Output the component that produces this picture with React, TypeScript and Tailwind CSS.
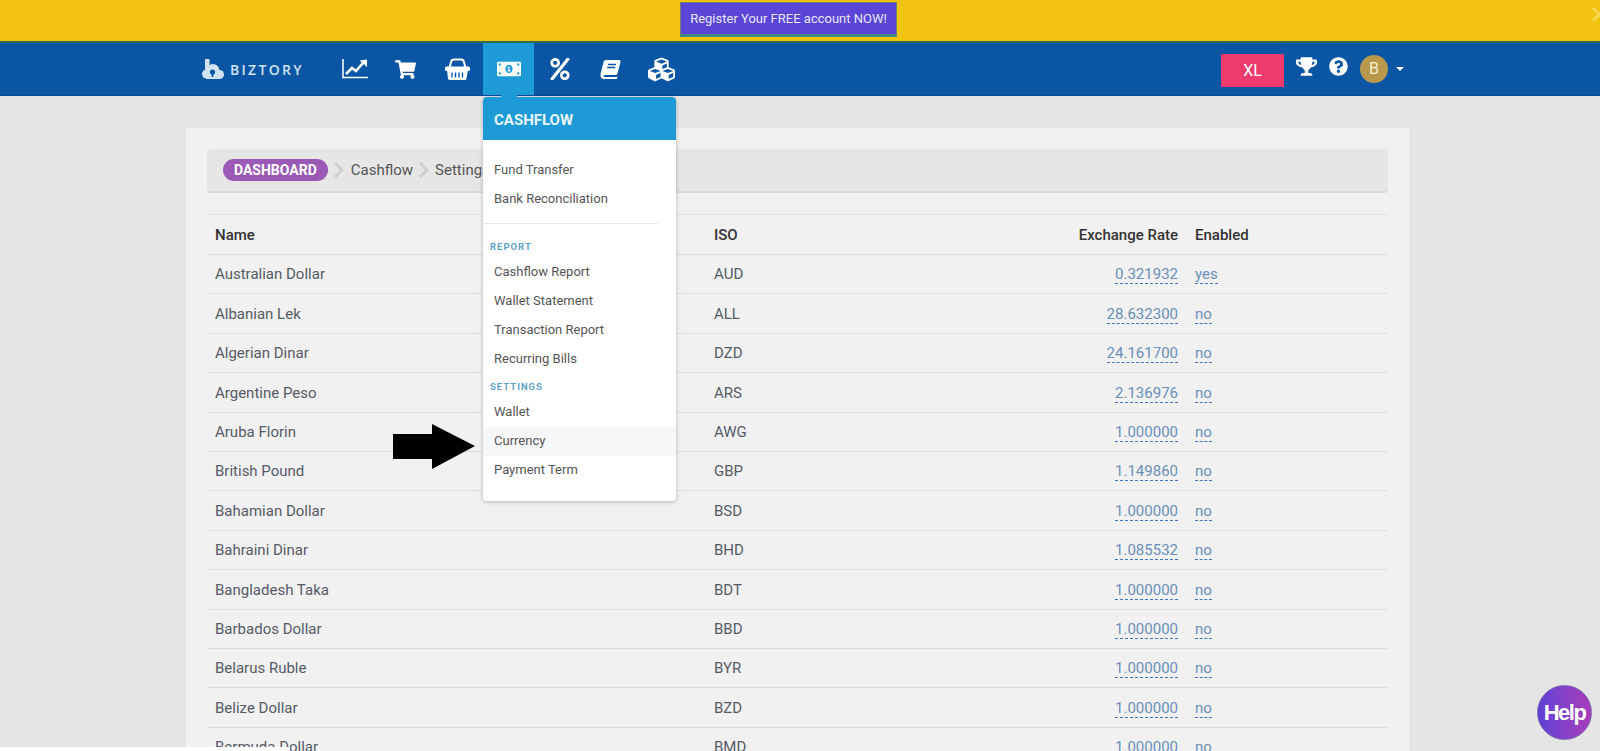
import { FaCubes, FaMoneyBillAlt, FaPercent, FaQuestionCircle, FaShoppingCart, FaTrophy } from "react-icons/fa";

const rows = [
  ["Australian Dollar", "AUD", "0.321932", "yes"],
  ["Albanian Lek", "ALL", "28.632300", "no"],
  ["Algerian Dinar", "DZD", "24.161700", "no"],
  ["Argentine Peso", "ARS", "2.136976", "no"],
  ["Aruba Florin", "AWG", "1.000000", "no"],
  ["British Pound", "GBP", "1.149860", "no"],
  ["Bahamian Dollar", "BSD", "1.000000", "no"],
  ["Bahraini Dinar", "BHD", "1.085532", "no"],
  ["Bangladesh Taka", "BDT", "1.000000", "no"],
  ["Barbados Dollar", "BBD", "1.000000", "no"],
  ["Belarus Ruble", "BYR", "1.000000", "no"],
  ["Belize Dollar", "BZD", "1.000000", "no"],
  ["Bermuda Dollar", "BMD", "1.000000", "no"],
];

function ChartIcon() {
  return (
    <svg width="26" height="20" viewBox="0 0 26 20" fill="none" stroke="currentColor" className="mr-[2px]">
      <path d="M1 0v18.500h25" strokeWidth="1.500" />
      <path d="M4 15l6-6 4 3 7-8" strokeWidth="2.600" />
      <path d="M17.500 1.500L25 0.500V8z" fill="currentColor" stroke="none" />
    </svg>
  );
}

function BasketIcon() {
  return (
    <svg width="25" height="22" viewBox="0 0 25 22">
      <path d="M4.500 10L6 4q.5-2.500 3-2.500h7q2.500 0 3 2.500L20.500 10" fill="none" stroke="currentColor" strokeWidth="2" />
      <rect x="0" y="8.500" width="25" height="4.500" rx="1.500" fill="currentColor" />
      <path d="M2 12h21l-1.500 8.500q-.3 1.500-2 1.500h-14.500q-1.700 0-2-1.500z" fill="currentColor" />
      <path d="M7 14.500v5M10.500 14.500v5M14 14.500v5M17.500 14.500v5" stroke="#0a56a5" strokeWidth="1.400" />
    </svg>
  );
}

function BookIcon() {
  return (
    <svg width="21" height="19" viewBox="0 0 21 19">
      <path d="M6 0h13q2 0 1.500 2l-3 11.500q-.4 1.500-2 1.500H5q-2 0-1.500 1.300.3.700 1.500.700h11.500l1-1-.6 3H4q-3 0-3.500-3-.2-1.500.3-3L3.500 2Q4 0 6 0z" fill="currentColor" />
      <path d="M8 4.500h8M7.200 7.500h8" stroke="#0a56a5" strokeWidth="1.300" />
    </svg>
  );
}

function LogoIcon() {
  return (
    <svg width="22" height="20" viewBox="0 0 22 20" className="text-[#cfe3f2]">
      <rect x="3" y="0" width="4.500" height="12" fill="currentColor" />
      <circle cx="11" cy="11.500" r="6.500" fill="currentColor" />
      <circle cx="4.500" cy="15" r="4.500" fill="currentColor" />
      <circle cx="17.500" cy="15.500" r="4.500" fill="currentColor" />
      <rect x="4" y="14" width="14" height="6" fill="currentColor" />
      <circle cx="10.500" cy="13" r="2.600" fill="#0a56a5" />
      <rect x="9.600" y="13" width="1.800" height="5" fill="#0a56a5" />
    </svg>
  );
}

const navIcons = [
  <ChartIcon key="chart" />,
  <FaShoppingCart key="cart" className="text-[21px] mr-[2px]" />,
  <BasketIcon key="basket" />,
  <FaMoneyBillAlt key="cash" className="text-[24px]" />,
  <FaPercent key="percent" className="text-[22px]" />,
  <BookIcon key="book" />,
  <FaCubes key="cubes" className="text-[27px]" />,
];

function MenuLink({ label, active }: { label: string; active?: boolean }) {
  return (
    <div className={`h-[29px] pl-[11px] flex items-center text-[13px] text-[#555] ${active ? "bg-[#f6f7f8]" : ""}`}>
      {label}
    </div>
  );
}

function Chevron() {
  return (
    <svg width="10" height="16" viewBox="0 0 10 16" className="mx-[6px]">
      <path d="M1 1l7 7-7 7" fill="none" stroke="#cfcfcf" strokeWidth="3" />
    </svg>
  );
}

export default function App() {
  return (
    <div className="relative h-[751px] overflow-hidden bg-[#e5e5e5] font-['Roboto',sans-serif]">
      {/* Register banner */}
      <div className="relative h-[43px] bg-[#f1c40f] border-b-2 border-[#2f6b4f] pl-[680px] pt-[2px]">
        <div className="h-[35px] w-[217px] bg-[#5b45d6] border border-[#6f7f70] border-b-[3px] border-b-[#3f8a86] flex items-center justify-center text-[13px] text-[#e8e6fb]">
          Register Your FREE account NOW!
        </div>
        <svg width="8" height="15" viewBox="0 0 8 15" className="absolute right-0 top-[7px]">
          <path d="M1 1l12 13M13 1L1 14" stroke="#f5d54f" strokeWidth="3" />
        </svg>
      </div>

      {/* Top nav */}
      <nav className="h-[53px] bg-[#0a56a5] border-b border-[#084a8e] pl-[202px] flex items-center">
        <div className="flex items-center w-[128px]">
          <LogoIcon />
          <span className="ml-[6px] text-[14px] font-semibold tracking-[2.3px] text-[#cfe3f2] font-['Open_Sans',sans-serif]">BIZTORY</span>
        </div>
        <div className="flex h-full">
          {navIcons.map((icon, i) => (
            <div key={i} className={`w-[51px] h-full flex items-center justify-center text-white ${i === 3 ? "bg-[#1e9bd7]" : ""}`}>
              {icon}
            </div>
          ))}
        </div>
        <div className="ml-auto flex items-center pr-[196px]">
          <div className="mt-[3px] mr-px w-[63px] h-[33px] bg-[#ef3a6e] text-white text-[16px] flex items-center justify-center">XL</div>
          <FaTrophy className="ml-[11px] mb-[6px] text-white text-[21px]" />
          <FaQuestionCircle className="ml-[12px] mb-[6px] text-white text-[19px]" />
          <div className="ml-[12px] w-[28px] h-[28px] rounded-full bg-[#b8984a] text-[#f8eecf] text-[16px] flex items-center justify-center">B</div>
          <span className="ml-[8px] w-0 h-0 border-x-[4px] border-x-transparent border-t-[4px] border-t-white" />
        </div>
      </nav>

      {/* Content card */}
      <main className="ml-[186px] mt-[32px] w-[1223px] bg-[#f1f1f1] px-[21px] pt-[21px]">
        <div className="h-[44px] bg-[#e6e6e6] border-b-2 border-[#d9d9d9] rounded-[4px] flex items-center pl-[16px] text-[15px] text-[#555]">
          <span className="h-[22px] rounded-full bg-[#9b59b6] px-[11px] flex items-center text-[14px] font-bold text-white">DASHBOARD</span>
          <Chevron />
          <span className="ml-px">Cashflow</span>
          <Chevron />
          <span>Settings</span>
        </div>
        <table className="mt-[21px] w-full border-t border-[#e2e2e2] text-[15px] border-collapse">
          <thead>
            <tr className="h-[40px] border-b border-[#dcdcdc] text-[#333]">
              <th className="pl-[8px] pt-px text-left font-medium w-[507px]">Name</th>
              <th className="pt-px text-left font-medium">ISO</th>
              <th className="pt-px text-right font-medium pr-[8px]">Exchange Rate</th>
              <th className="pl-[9px] pt-px text-left font-medium w-[202px]">Enabled</th>
            </tr>
          </thead>
          <tbody>
            {rows.map((r) => (
              <tr key={r[1]} className="h-[39.4px] border-b border-[#dfdfdf] text-[#555b66]">
                <td className="pl-[8px] pt-px">{r[0]}</td>
                <td className="pt-px">{r[1]}</td>
                <td className="text-right pr-[8px] pt-px">
                  <span className="text-[#6a8fb8] border-b border-dashed border-[#3f78c0]">{r[2]}</span>
                </td>
                <td className="pl-[9px] pt-px">
                  <span className="text-[#6a8fb8] border-b border-dashed border-[#3f78c0]">{r[3]}</span>
                </td>
              </tr>
            ))}
          </tbody>
        </table>
      </main>

      {/* Cashflow dropdown */}
      <div className="absolute left-[483px] top-[97px] w-[193px] h-[404px] bg-white rounded-[4px] shadow-[0_1px_4px_rgba(0,0,0,0.25)]">
        <div className="absolute left-[18px] top-[-2px] w-[16px] h-[3px] bg-[#1e9bd7]" />
        <div className="h-[43px] rounded-t-[4px] bg-[#1e9bd7] pl-[11px] pt-[3px] flex items-center text-[15px] font-bold text-[#e8f5fc]">CASHFLOW</div>
        <div className="pt-[15px]">
          <MenuLink label="Fund Transfer" />
          <MenuLink label="Bank Reconciliation" />
          <div className="mt-[10px] mr-[18px] border-t border-[#e6e6e6]" />
          <div className="mt-[16px] mb-[3px] pl-[7px] text-[9.500px] font-bold tracking-[1px] text-[#5fa3c7]">REPORT</div>
          <MenuLink label="Cashflow Report" />
          <MenuLink label="Wallet Statement" />
          <MenuLink label="Transaction Report" />
          <MenuLink label="Recurring Bills" />
          <div className="mt-[7px] mb-[3px] pl-[7px] text-[9.500px] font-bold tracking-[1px] text-[#5fa3c7]">SETTINGS</div>
          <MenuLink label="Wallet" />
          <MenuLink label="Currency" active />
          <MenuLink label="Payment Term" />
        </div>
      </div>

      {/* Annotation arrow */}
      <svg width="82" height="45" viewBox="0 0 82 45" className="absolute left-[393px] top-[424px]">
        <path d="M0 10h39V0l43 22-43 23V35H0z" fill="#000" />
      </svg>

      {/* Help bubble */}
      <div className="absolute left-[1537px] top-[685px] w-[55px] h-[55px] rounded-full bg-gradient-to-r from-[#5f3fd6] to-[#a83bb8] border border-[#7a6bb0] flex items-center justify-center text-[22px] font-bold tracking-[-1.500px] text-white font-['Liberation_Sans',sans-serif]">
        Help
      </div>

      {/* Bottom strip */}
      <div className="absolute left-0 bottom-0 w-[290px] h-[4px] bg-white" />
    </div>
  );
}
